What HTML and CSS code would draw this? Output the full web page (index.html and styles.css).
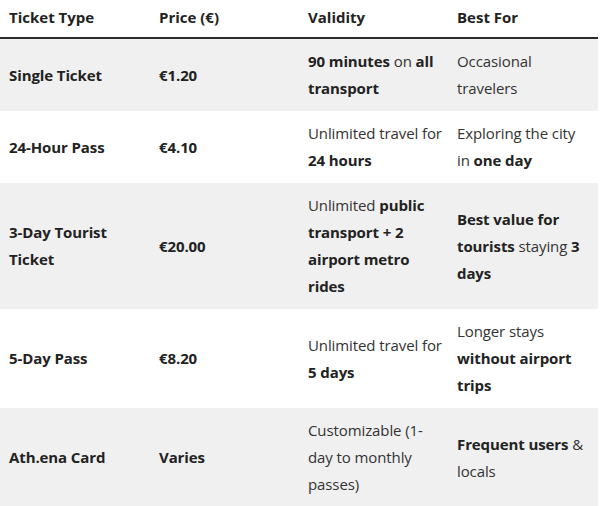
FILE: index.html
```html
<!DOCTYPE html>
<html>
<head>
<meta charset="utf-8">
<link rel="stylesheet" href="styles.css">
</head>
<body>
<table class="tickets">
  <thead>
    <tr><th class="c1">Ticket Type</th><th class="c2">Price (€)</th><th class="c3">Validity</th><th class="c4">Best For</th></tr>
  </thead>
  <tbody>
    <tr>
      <td><b>Single Ticket</b></td>
      <td><b>€1.20</b></td>
      <td><b>90 minutes</b> on <b>all transport</b></td>
      <td class="last">Occasional travelers</td>
    </tr>
    <tr>
      <td><b>24-Hour Pass</b></td>
      <td><b>€4.10</b></td>
      <td>Unlimited travel for <b>24 hours</b></td>
      <td class="last">Exploring the city in <b>one day</b></td>
    </tr>
    <tr>
      <td><b>3-Day Tourist Ticket</b></td>
      <td><b>€20.00</b></td>
      <td>Unlimited <b>public transport + 2 airport metro rides</b></td>
      <td class="last"><b>Best value for tourists</b> staying <b>3 days</b></td>
    </tr>
    <tr>
      <td><b>5-Day Pass</b></td>
      <td><b>€8.20</b></td>
      <td>Unlimited travel for <b>5 days</b></td>
      <td class="last">Longer stays <b>without airport trips</b></td>
    </tr>
    <tr>
      <td><b>Ath.ena Card</b></td>
      <td><b>Varies</b></td>
      <td>Customizable (1-day to monthly passes)</td>
      <td class="last"><b>Frequent users</b> &amp; locals</td>
    </tr>
  </tbody>
</table>
</body>
</html>
```

FILE: styles.css
```css
html, body {
  margin: 0;
  padding: 0;
  background: #ffffff;
}
body {
  font-family: "Open Sans", "Noto Sans", sans-serif;
  font-size: 15px;
  line-height: 27px;
  color: #222222;
}
.tickets {
  border-collapse: collapse;
  width: 598px;
  table-layout: fixed;
}
.tickets th {
  text-align: left;
  font-weight: 700;
  padding: 4px 5px 6px 9px;
  border-bottom: 2px solid #2b2b2b;
}
.tickets .c1 { width: 136px; }
.tickets .c2 { width: 135px; }
.tickets .c3 { width: 135px; }
.tickets .c4 { width: 132px; padding-right: 9px; }
.tickets td {
  padding: 9px 5px 9px 9px;
  vertical-align: middle;
  font-weight: 400;
  color: #333333;
  letter-spacing: -0.1px;
}
.tickets td.last {
  padding-right: 9px;
}
.tickets td b {
  font-weight: 700;
  color: #222222;
}
.tickets tbody tr:nth-child(odd) {
  background: #f0f0f0;
}
```
